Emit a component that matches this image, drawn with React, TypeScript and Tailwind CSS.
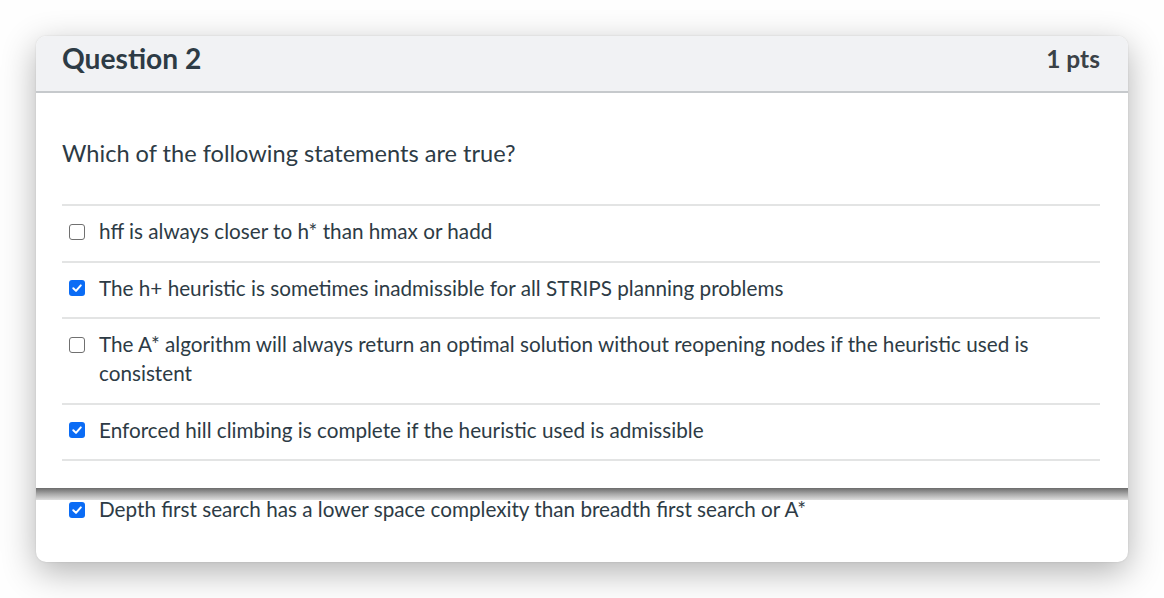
import React from "react";

function Box({ checked }: { checked: boolean }) {
  if (checked) {
    return (
      <span className="flex h-[16px] w-[16px] shrink-0 items-center justify-center rounded-[3px] bg-[#0b6cf5]">
        <svg width="12" height="12" viewBox="0 0 12 12" fill="none">
          <path d="M2.3 6.3 L5 8.9 L9.8 3.4" stroke="#ffffff" strokeWidth="2" strokeLinecap="round" strokeLinejoin="round" />
        </svg>
      </span>
    );
  }
  return <span className="block h-[16px] w-[16px] shrink-0 rounded-[3px] border-[1.5px] border-[#707070] bg-white" />;
}

function Option({ checked, text }: { checked: boolean; text: string }) {
  return (
    <div className="flex items-start border-t-2 border-[#e3e4e4] pt-[11px] pb-[14.5px]">
      <div className="flex h-[29px] w-[37px] shrink-0 items-center pl-[7px]">
        <Box checked={checked} />
      </div>
      <div className="text-[20.7px] leading-[29px] text-[#2d3b45]">{text}</div>
    </div>
  );
}

export default function App() {
  return (
    <div className="h-[598px] w-[1164px] bg-[#fefefe] pl-[36px] pt-[36px] font-['Lato','Noto_Sans',sans-serif]">
      <div className="flex h-[526px] w-[1092px] flex-col overflow-hidden rounded-[10px] bg-white shadow-[0_10px_34px_rgba(0,0,0,0.30),0_0_2px_rgba(0,0,0,0.12)]">
        <div className="flex h-[57px] shrink-0 items-center justify-between border-b-2 border-[#c6c9cc] bg-[#f1f2f4] pl-[26px] pr-[28px]">
          <div className="text-[28.2px] font-bold leading-none text-[#2d3b45] -mt-[10px]">Question 2</div>
          <div className="text-[24.5px] font-bold leading-none text-[#3b4247] -mt-[8px]">1 pts</div>
        </div>
        <div className="h-[395px] shrink-0 pl-[26px] pr-[28px] pt-[46px]">
          <div className="mb-[36px] text-[23.6px] leading-[30px] text-[#2d3b45] -mt-[1px]">Which of the following statements are true?</div>
          <Option checked={false} text="hff is always closer to h* than hmax or hadd" />
          <Option checked={true} text="The h+ heuristic is sometimes inadmissible for all STRIPS planning problems" />
          <Option checked={false} text="The A* algorithm will always return an optimal solution without reopening nodes if the heuristic used is consistent" />
          <Option checked={true} text="Enforced hill climbing is complete if the heuristic used is admissible" />
          <div className="border-t-2 border-[#e3e4e4]" />
        </div>
        <div className="h-[12px] shrink-0 bg-gradient-to-b from-[#6c6c6c] via-[#a8a8a8] to-[#dedede]" />
        <div className="relative -mt-[5px] flex items-start pl-[26px]">
          <div className="flex h-[29px] w-[37px] shrink-0 items-center pl-[7px]">
            <Box checked={true} />
          </div>
          <div className="text-[20.7px] leading-[29px] text-[#2d3b45]">Depth first search has a lower space complexity than breadth first search or A*</div>
        </div>
      </div>
    </div>
  );
}
